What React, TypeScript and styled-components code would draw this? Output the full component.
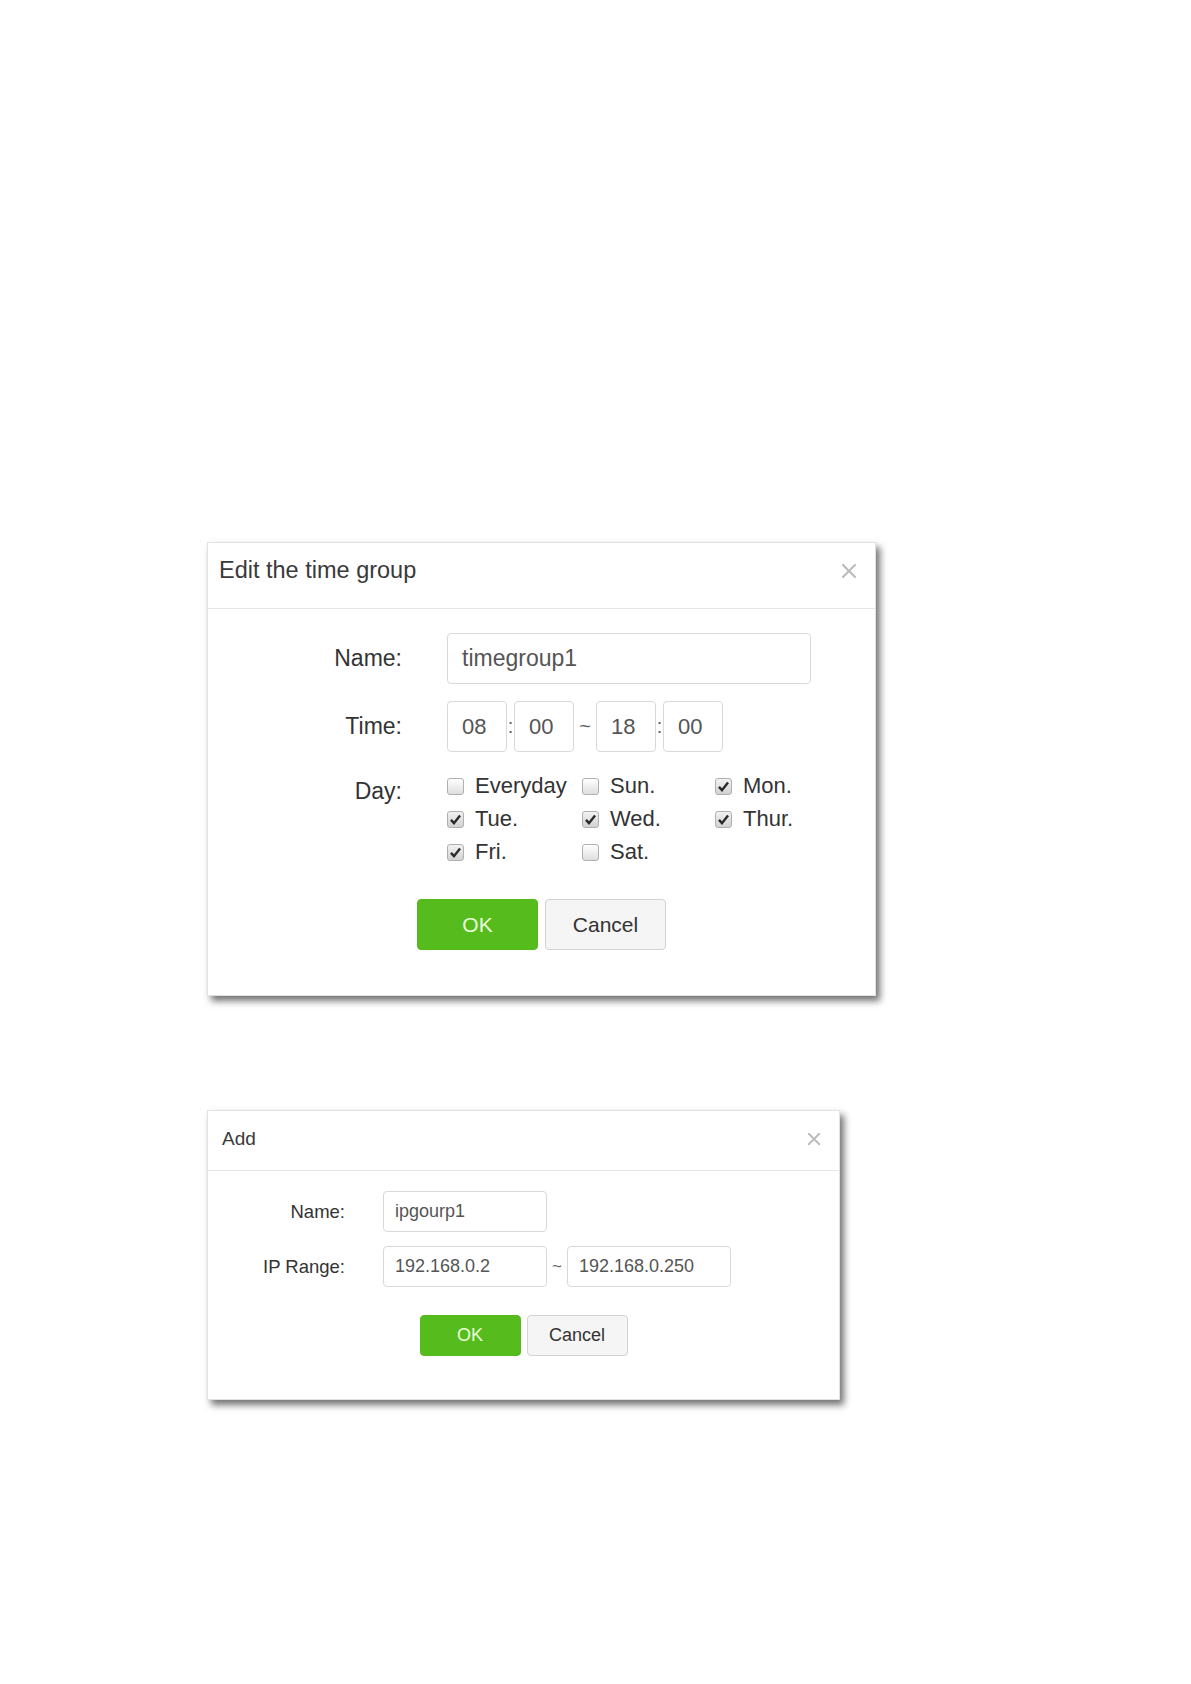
import React from 'react';
import styled, { createGlobalStyle } from 'styled-components';

const GlobalStyle = createGlobalStyle`
  html, body {
    margin: 0;
    padding: 0;
    background: #ffffff;
  }
  body {
    font-family: 'Liberation Sans', Arial, sans-serif;
    color: #333333;
  }
`;

const Page = styled.div`
  width: 1191px;
  min-height: 1684px;
  box-sizing: border-box;
  padding: 542px 0 0 207px;
  display: flex;
  flex-direction: column;
  align-items: flex-start;
  gap: 114px;
`;

const Dialog = styled.div<{ $w: number }>`
  width: ${p => p.$w}px;
  background: #ffffff;
  border: 1px solid #e2e2e2;
  box-sizing: border-box;
  box-shadow: 4px 5px 7px rgba(0, 0, 0, 0.55);
`;

const Header = styled.div<{ $h: number; $pt: number; $pl: number }>`
  height: ${p => p.$h}px;
  box-sizing: border-box;
  padding: ${p => p.$pt}px 18px 0 ${p => p.$pl}px;
  border-bottom: 1px solid #e6e6e6;
  display: flex;
  justify-content: space-between;
  align-items: flex-start;
`;

const Title = styled.div<{ $fs: number; $lh: number }>`
  font-size: ${p => p.$fs}px;
  line-height: ${p => p.$lh}px;
  color: #3a3a3a;
`;

const Close = styled.svg`
  flex: none;
  display: block;
`;

const CloseWrap = styled.div<{ $pt: number }>`
  padding-top: ${p => p.$pt}px;
`;

const Body = styled.div<{ $pt: number; $pb: number }>`
  padding: ${p => p.$pt}px 0 ${p => p.$pb}px;
`;

const Form = styled.div<{ $label: number; $gap: number; $row: number }>`
  display: grid;
  grid-template-columns: ${p => p.$label}px auto;
  column-gap: ${p => p.$gap}px;
  row-gap: ${p => p.$row}px;
  align-items: center;
`;

const Label = styled.div<{ $fs: number; $pt?: number }>`
  justify-self: end;
  align-self: ${p => (p.$pt !== undefined ? 'start' : 'center')};
  padding-top: ${p => p.$pt ?? 0}px;
  font-size: ${p => p.$fs}px;
  line-height: 33px;
  color: #333333;
`;

const Field = styled.input<{ $w: number; $h: number; $fs: number; $pl: number }>`
  width: ${p => p.$w}px;
  height: ${p => p.$h}px;
  box-sizing: border-box;
  margin: 0;
  padding: 0 4px 0 ${p => p.$pl}px;
  border: 1px solid #d9d9d9;
  border-radius: 4px;
  background: #ffffff;
  font-family: 'Liberation Sans', Arial, sans-serif;
  font-size: ${p => p.$fs}px;
  color: #555555;
  outline: none;
`;

const Inline = styled.div`
  display: flex;
  align-items: center;
`;

const Sep = styled.span<{ $w: number; $fs: number }>`
  width: ${p => p.$w}px;
  text-align: center;
  font-size: ${p => p.$fs}px;
  color: #666666;
`;

const DayGrid = styled.div`
  display: grid;
  grid-template-columns: 135px 133px auto;
  grid-auto-rows: 33px;
`;

const Day = styled.label`
  display: flex;
  align-items: center;
  gap: 11px;
  font-size: 22px;
  color: #333333;
`;

const Box = styled.span<{ $on: boolean }>`
  flex: none;
  width: 17px;
  height: 17px;
  box-sizing: border-box;
  border: 1px solid #b0b0b0;
  border-radius: 3px;
  background: ${p =>
    p.$on
      ? 'linear-gradient(#f2f2f2, #d2d2d2)'
      : 'linear-gradient(#ffffff, #dedede)'};
  display: flex;
  align-items: center;
  justify-content: center;
  margin-top: 2px;
`;

const Actions = styled.div<{ $mt: number; $gap: number }>`
  margin-top: ${p => p.$mt}px;
  display: flex;
  justify-content: center;
  gap: ${p => p.$gap}px;
`;

const Button = styled.button<{ $primary?: boolean; $w: number; $h: number; $fs: number }>`
  width: ${p => p.$w}px;
  height: ${p => p.$h}px;
  box-sizing: border-box;
  margin: 0;
  padding: 0;
  border-radius: 4px;
  border: 1px solid ${p => (p.$primary ? '#55ba1c' : '#d2d2d2')};
  background: ${p => (p.$primary ? '#56bb1d' : '#f5f5f5')};
  color: ${p => (p.$primary ? '#eaffdc' : '#333333')};
  font-family: 'Liberation Sans', Arial, sans-serif;
  font-size: ${p => p.$fs}px;
  cursor: pointer;
`;

const CloseIcon = ({ size }: { size: number }) => (
  <Close width={size} height={size} viewBox="0 0 16 16">
    <path d="M2 2 L14 14 M14 2 L2 14" stroke="#bcbcbc" strokeWidth="2.2" strokeLinecap="round" />
  </Close>
);

const Check = ({ label, on }: { label: string; on: boolean }) => (
  <Day>
    <Box $on={on}>
      {on && (
        <svg width="13" height="13" viewBox="0 0 12 12">
          <path d="M1.8 6.4 L4.6 9.4 L10.2 2.4" fill="none" stroke="#2a2a2a" strokeWidth="2.2" />
        </svg>
      )}
    </Box>
    {label}
  </Day>
);

const days: [string, boolean][] = [
  ['Everyday', false],
  ['Sun.', false],
  ['Mon.', true],
  ['Tue.', true],
  ['Wed.', true],
  ['Thur.', true],
  ['Fri.', true],
  ['Sat.', false],
];

const TimeField = ({ value }: { value: string }) => (
  <Field $w={60} $h={51} $fs={22} $pl={14} defaultValue={value} readOnly />
);

const EditTimeGroup = () => (
  <Dialog $w={669}>
    <Header $h={66} $pt={11} $pl={11}>
      <Title $fs={23.5} $lh={32}>Edit the time group</Title>
      <CloseWrap $pt={9}>
        <CloseIcon size={16} />
      </CloseWrap>
    </Header>
    <Body $pt={24} $pb={45}>
      <Form $label={194} $gap={45} $row={17}>
        <Label $fs={23}>Name:</Label>
        <Field $w={364} $h={51} $fs={23} $pl={14} defaultValue="timegroup1" readOnly />
        <Label $fs={23}>Time:</Label>
        <Inline>
          <TimeField value="08" />
          <Sep $w={7} $fs={20}>:</Sep>
          <TimeField value="00" />
          <Sep $w={22} $fs={20}>~</Sep>
          <TimeField value="18" />
          <Sep $w={7} $fs={20}>:</Sep>
          <TimeField value="00" />
        </Inline>
        <Label $fs={23} $pt={6}>Day:</Label>
        <DayGrid>
          {days.map(([d, on]) => (
            <Check key={d} label={d} on={on} />
          ))}
        </DayGrid>
      </Form>
      <Actions $mt={31} $gap={7}>
        <Button $primary $w={121} $h={51} $fs={21}>OK</Button>
        <Button $w={121} $h={51} $fs={21}>Cancel</Button>
      </Actions>
    </Body>
  </Dialog>
);

const AddIpGroup = () => (
  <Dialog $w={633}>
    <Header $h={60} $pt={15} $pl={14}>
      <Title $fs={19} $lh={26}>Add</Title>
      <CloseWrap $pt={6}>
        <CloseIcon size={14} />
      </CloseWrap>
    </Header>
    <Body $pt={20} $pb={43}>
      <Form $label={137} $gap={38} $row={14}>
        <Label $fs={18.5}>Name:</Label>
        <Field $w={164} $h={41} $fs={18} $pl={11} defaultValue="ipgourp1" readOnly />
        <Label $fs={18.5}>IP Range:</Label>
        <Inline>
          <Field $w={164} $h={41} $fs={18} $pl={11} defaultValue="192.168.0.2" readOnly />
          <Sep $w={20} $fs={17}>~</Sep>
          <Field $w={164} $h={41} $fs={18} $pl={11} defaultValue="192.168.0.250" readOnly />
        </Inline>
      </Form>
      <Actions $mt={28} $gap={6}>
        <Button $primary $w={101} $h={41} $fs={18}>OK</Button>
        <Button $w={101} $h={41} $fs={18}>Cancel</Button>
      </Actions>
    </Body>
  </Dialog>
);

export default function App() {
  return (
    <>
      <GlobalStyle />
      <Page>
        <EditTimeGroup />
        <AddIpGroup />
      </Page>
    </>
  );
}
